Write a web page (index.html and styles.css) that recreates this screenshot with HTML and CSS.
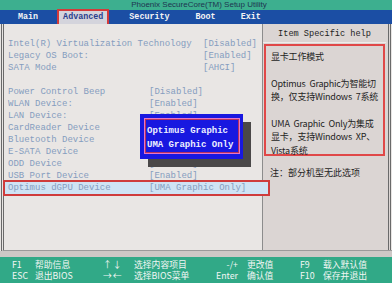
FILE: index.html
```html
<!DOCTYPE html>
<html>
<head>
<meta charset="utf-8">
<link rel="stylesheet" href="styles.css">
</head>
<body>
<div class="screen">
  <div class="title">Phoenix SecureCore(TM) Setup Utility</div>
  <div class="menu">
    <span class="mi m-main">Main</span>
    <span class="mi m-adv active">Advanced</span>
    <span class="mi m-sec">Security</span>
    <span class="mi m-boot">Boot</span>
    <span class="mi m-exit">Exit</span>
  </div>
  <div class="main">
    <div class="left">
      <div class="row wide"><span class="lbl">Intel(R) Virtualization Technology</span><span class="val">[Disabled]</span></div>
      <div class="row wide"><span class="lbl">Legacy OS Boot:</span><span class="val">[Enabled]</span></div>
      <div class="row wide"><span class="lbl">SATA Mode</span><span class="val">[AHCI]</span></div>
      <div class="row"></div>
      <div class="row"><span class="lbl">Power Control Beep</span><span class="val">[Disabled]</span></div>
      <div class="row"><span class="lbl">WLAN Device:</span><span class="val">[Enabled]</span></div>
      <div class="row"><span class="lbl">LAN Device:</span><span class="val">[Enabled]</span></div>
      <div class="row"><span class="lbl">CardReader Device</span><span class="val">[Enabled]</span></div>
      <div class="row"><span class="lbl">Bluetooth Device</span><span class="val">[Enabled]</span></div>
      <div class="row"><span class="lbl">E-SATA Device</span><span class="val">[Enabled]</span></div>
      <div class="row"><span class="lbl">ODD Device</span><span class="val">[Enabled]</span></div>
      <div class="row"><span class="lbl">USB Port Device</span><span class="val">[Enabled]</span></div>
      <div class="row selected"><span class="lbl">Optimus dGPU Device</span><span class="val">[UMA Graphic Only]</span></div>

      <div class="popup">
        <div class="popup-inner">
          <div class="opt">Optimus Graphic</div>
          <div class="opt">UMA Graphic Only</div>
        </div>
      </div>
    </div>
    <div class="right">
      <div class="help-head">Item Specific help</div>
      <div class="help-box">
        <p>显卡工作模式</p>
        <p>Optimus Graphic为智能切<br>换，仅支持Windows 7系统</p>
        <p>UMA Graphic Only为集成<br>显卡，支持Windows XP、<br>Vista系统</p>
      </div>
      <p class="note">注：部分机型无此选项</p>
    </div>
  </div>
  <div class="band"></div>
  <div class="status">
    <span>F1</span><span>帮助信息</span><span class="arr">↑↓</span><span>选择内容项目</span><span class="rk">-/+</span><span>更改值</span><span>F9</span><span>载入默认值</span>
    <span>ESC</span><span>退出BIOS</span><span class="arr">→←</span><span>选择BIOS菜单</span><span class="rk">Enter</span><span>确认值</span><span>F10</span><span>保存并退出</span>
  </div>
</div>
</body>
</html>
```
FILE: styles.css
```css
html, body {
  margin: 0;
  padding: 0;
  width: 392px;
  height: 283px;
  overflow: hidden;
  background: #e8e5e3;
}
.screen {
  width: 392px;
  height: 283px;
  display: flex;
  flex-direction: column;
}
.title {
  height: 10px;
  background: #3daf8f;
  color: #1e3550;
  font-family: "Liberation Sans", sans-serif;
  font-size: 8px;
  line-height: 10px;
  text-align: center;
  padding-left: 6px;
}
.menu {
  height: 14px;
  background: #1b4ea4;
  display: flex;
  align-items: center;
  font-family: "Liberation Mono", monospace;
  font-weight: bold;
  font-size: 8.4px;
  color: #f4f4f4;
}
.mi {
  line-height: 13px;
}
.m-main { margin-left: 18px; }
.m-adv {
  margin-left: 21px;
  padding: 0 4px;
  background: #d4d4dc;
  color: #2b3f8c;
  outline: 2px solid #d43a3a;
  outline-offset: 0;
  height: 13px;
}
.m-sec { margin-left: 22px; }
.m-boot { margin-left: 26px; }
.m-exit { margin-left: 25px; }

.main {
  height: 226px;
  display: flex;
  border-left: 3px double #6a6a6a;
  margin-left: 1px;
  border-bottom: 1px solid #9a9a9a;
}
.left {
  position: relative;
  width: 258px;
  flex-shrink: 0;
  padding-top: 14px;
  background: #e9e6e4;
  font-family: "Liberation Mono", monospace;
  font-size: 9px;
  color: #859dbf;
}
.row {
  height: 12px;
  line-height: 12px;
  display: flex;
  padding-left: 4px;
  white-space: nowrap;
}
.lbl { width: 141px; flex-shrink: 0; }
.wide .lbl { width: 195px; }
.val { flex-shrink: 0; }
.selected {
  background: #cfe3f4;
  outline: 2px solid #cf3c3c;
  margin-left: 1px;
  margin-right: -6px;
  padding-left: 3px;
  position: relative;
  z-index: 1;
}
.popup {
  position: absolute;
  left: 136px;
  top: 90px;
  width: 103px;
  height: 45px;
  background: #1818e0;
  box-shadow: 8px 8px 0 #4a4848;
  padding: 4px 3px 5px 4px;
  box-sizing: border-box;
}
.popup-inner {
  height: 100%;
  border: 1px solid #e476c8;
  outline: 1px solid #b6305e;
  outline-offset: -2px;
  padding: 5px 0 0 2px;
  box-sizing: border-box;
}
.opt {
  font-family: "Liberation Mono", monospace;
  font-weight: bold;
  font-size: 9px;
  line-height: 14px;
  color: #eef0ff;
  white-space: nowrap;
}
.right {
  flex: 1;
  background: #dbd5d3;
  border-left: 1px solid #8c8c8c;
  border-right: 3px double #6a6a6a;
  margin-right: 1px;
  font-family: "Noto Sans CJK SC", "Noto Sans", sans-serif;
  font-size: 9px;
  color: #1e1e1e;
}
.help-head {
  font-family: "Liberation Mono", monospace;
  font-size: 8.6px;
  text-align: center;
  height: 18px;
  line-height: 21px;
  border-bottom: 1px solid #f0ecea;
  margin-right: 2px;
}
.help-box {
  margin: 1px 3px 0 1px;
  border: 2px solid #e04848;
  height: 112px;
  box-sizing: border-box;
  padding: 4px 4px 0 5px;
}
.help-box p {
  margin: 0 0 13px 0;
  line-height: 13.5px;
  letter-spacing: -0.2px;
  word-spacing: 2px;
}
.note {
  margin: 10px 0 0 7px;
  line-height: 13px;
}
.band {
  height: 6px;
  background: #cdc8c6;
}
.status {
  flex: 1;
  background: #31a987;
  display: grid;
  grid-template-columns: 23px 65px 34px 76px 37px 53px 23px auto;
  grid-auto-rows: 11px;
  align-content: center;
  padding-left: 12px;
  font-family: "Noto Sans CJK SC", "Noto Sans", sans-serif;
  font-size: 8.8px;
  line-height: 11px;
  color: #f2f6f4;
  white-space: nowrap;
}
.status .rk {
  text-align: right;
  padding-right: 9px;
}
.status .arr {
  padding-left: 3px;
  letter-spacing: 1px;
}
```
